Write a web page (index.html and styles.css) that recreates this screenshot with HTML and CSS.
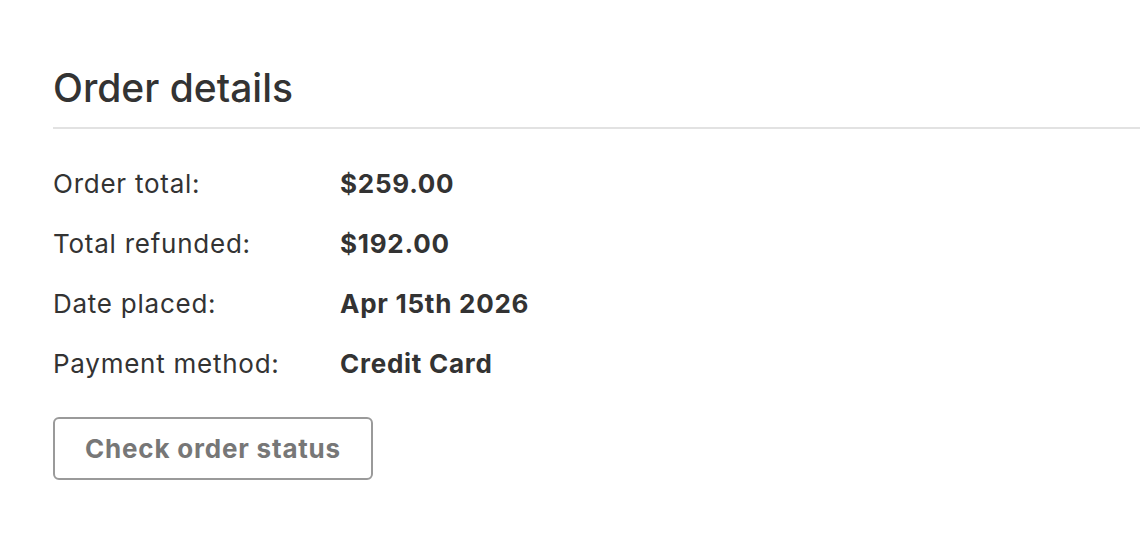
FILE: index.html
```html
<!DOCTYPE html>
<html>
<head>
<meta charset="utf-8">
<link rel="stylesheet" href="styles.css">
</head>
<body>
<div class="panel">
  <h1 class="title">Order details</h1>
  <div class="divider"></div>
  <div class="rows">
    <div class="row"><span class="label">Order total:</span><span class="value">$259.00</span></div>
    <div class="row"><span class="label">Total refunded:</span><span class="value">$192.00</span></div>
    <div class="row"><span class="label">Date placed:</span><span class="value">Apr 15th 2026</span></div>
    <div class="row"><span class="label">Payment method:</span><span class="value">Credit Card</span></div>
  </div>
  <button class="btn">Check order status</button>
</div>
</body>
</html>
```
FILE: styles.css
```css
html, body {
  margin: 0;
  padding: 0;
  background: #fff;
}
body {
  font-family: Inter, "Noto Sans", sans-serif;
  color: #333;
}
.panel {
  padding: 60px 0 0 53px;
}
.title {
  margin: 0;
  font-size: 39px;
  font-weight: 500;
  line-height: 56px;
  color: #333;
}
.divider {
  height: 2px;
  background: #e2e2e2;
  margin-top: 11px;
}
.rows {
  display: flex;
  flex-direction: column;
  padding-top: 24px;
}
.row {
  display: flex;
  height: 60px;
  align-items: center;
  font-size: 26px;
  letter-spacing: 0.75px;
}
.label {
  width: 287px;
  font-weight: 400;
}
.value {
  font-weight: 700;
}
.btn {
  margin-top: 24px;
  width: 320px;
  height: 63px;
  border: 2px solid #9a9a9a;
  border-radius: 6px;
  background: #fff;
  color: #777;
  font-family: Inter, "Noto Sans", sans-serif;
  font-size: 26px;
  letter-spacing: 0.8px;
  font-weight: 700;
  padding: 0;
}
```
